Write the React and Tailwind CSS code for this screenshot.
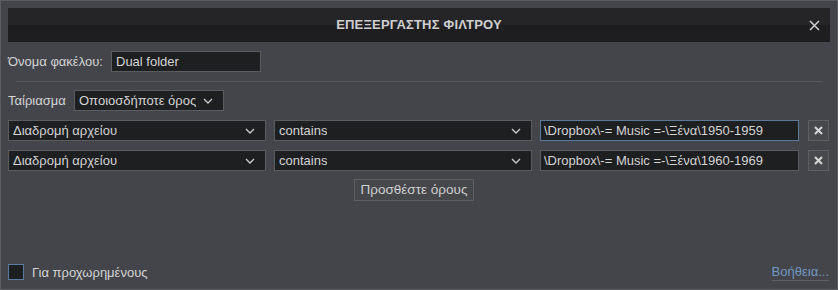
import React, { useState } from "react";

const font = { fontFamily: '"Liberation Sans", Arial, sans-serif' };

function Chevron() {
  return (
    <svg width="10" height="6" viewBox="0 0 10 6" className="shrink-0">
      <path d="M1 1 L5 5 L9 1" fill="none" stroke="#c8c8c8" strokeWidth="1.4" />
    </svg>
  );
}

function Select({ value, className }) {
  return (
    <div
      className={`flex items-center justify-between h-[21px] bg-[#1e1f21] border border-[#5b5c60] pl-[4px] pr-[10px] text-[13px] text-[#d4d4d4] ${className}`}
    >
      <span className="truncate">{value}</span>
      <Chevron />
    </div>
  );
}

function RemoveButton() {
  return (
    <button className="flex items-center justify-center w-[21px] h-[21px] bg-[#47494d] border border-[#5d5f63]">
      <svg width="9" height="9" viewBox="0 0 9 9">
        <path d="M1 1 L8 8 M8 1 L1 8" stroke="#d8d8d8" strokeWidth="2" />
      </svg>
    </button>
  );
}

export default function App() {
  const [rules] = useState([
    { field: "Διαδρομή αρχείου", op: "contains", value: "\\Dropbox\\-= Music =-\\Ξένα\\1950-1959", focused: true },
    { field: "Διαδρομή αρχείου", op: "contains", value: "\\Dropbox\\-= Music =-\\Ξένα\\1960-1969", focused: false },
  ]);

  return (
    <div style={font} className="w-[838px] h-[290px] bg-[#43454a] border border-[#5b5c61] flex flex-col text-[13px] text-[#d4d4d4]">
      {/* title bar */}
      <div className="relative mx-[7px] mt-[7px] h-[34px] flex flex-col">
        <div className="h-[17px] bg-[#252528]" />
        <div className="h-[17px] bg-[#1e1e20]" />
        <div className="absolute inset-0 flex items-center justify-center text-[13px] font-bold text-[#cfcfcf] tracking-[0.2px]">
          ΕΠΕΞΕΡΓΑΣΤΗΣ ΦΙΛΤΡΟΥ
        </div>
        <svg width="11" height="11" viewBox="0 0 11 11" className="absolute right-[10px] top-[12px]">
          <path d="M1 1 L10 10 M10 1 L1 10" stroke="#cfcfcf" strokeWidth="1.5" />
        </svg>
      </div>

      {/* folder name */}
      <div className="flex items-center mt-[9px] px-[7px]">
        <span className="w-[103px]">Όνομα φακέλου:</span>
        <div className="w-[150px] h-[21px] bg-[#1e1f21] border border-[#5b5c60] px-[4px] leading-[19px]">Dual folder</div>
      </div>

      <div className="mx-[15px] mt-[9px] h-px bg-[#55575b]" />

      {/* match */}
      <div className="flex items-center mt-[8px] px-[7px]">
        <span className="w-[66px]">Ταίριασμα</span>
        <Select value="Οποιοσδήποτε όρος" className="w-[150px]" />
      </div>

      {/* rules */}
      <div className="flex flex-col gap-[9px] mt-[9px] px-[7px]">
        {rules.map((r, i) => (
          <div key={i} className="flex items-center">
            <Select value={r.field} className="w-[258px]" />
            <Select value={r.op} className="w-[258px] ml-[8px]" />
            <div
              className={`w-[259px] ml-[8px] h-[21px] bg-[#1e1f21] border px-[3px] leading-[19px] ${
                r.focused ? "border-[#5d7898]" : "border-[#5b5c60]"
              }`}
            >
              {r.value}
            </div>
            <div className="ml-[9px]">
              <RemoveButton />
            </div>
          </div>
        ))}
      </div>

      <div className="flex justify-center mt-[8px] pr-[10px]">
        <button className="w-[120px] h-[22px] border border-[#5d5f63] bg-[#45474b] text-[13.5px] text-[#cfcfcf]">
          Προσθέστε όρους
        </button>
      </div>

      {/* footer */}
      <div className="mt-auto mb-[7px] px-[7px] flex items-center justify-between">
        <label className="flex items-center gap-[8px]">
          <span className="w-[16px] h-[16px] bg-[#1e1f21] border border-[#5a7aa0]" />
          <span>Για προχωρημένους</span>
        </label>
        <a className="text-[#7197c4] border-b border-[#5c6068] leading-[16px] mr-[1px]">Βοήθεια...</a>
      </div>
    </div>
  );
}
